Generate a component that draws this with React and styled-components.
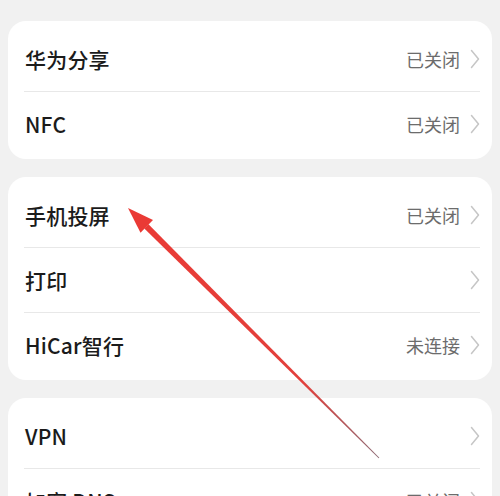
import React from "react";
import styled, { createGlobalStyle } from "styled-components";

const Global = createGlobalStyle`
  html, body { margin: 0; padding: 0; background: #f1f1f1; }
  body { font-family: "Noto Sans CJK SC", "Noto Sans", sans-serif; }
`;

const Page = styled.div`
  position: relative;
  width: 500px;
  height: 496px;
  overflow: hidden;
  background: #f1f1f1;
  box-sizing: border-box;
  padding: 21px 8px 0;
  display: flex;
  flex-direction: column;
  gap: 18px;
`;

const Card = styled.div`
  background: #ffffff;
  border-radius: 18px;
  padding: 6px 0 3px;
  display: flex;
  flex-direction: column;
  flex-shrink: 0;
`;

const Row = styled.div`
  height: 64px;
  display: flex;
  align-items: center;
  padding: 0 11px 0 17px;
`;

const Label = styled.div`
  flex: 1;
  font-size: 21px;
  font-weight: 500;
  color: #1b1b1b;
  letter-spacing: 0.2px;
`;

const Value = styled.div`
  font-size: 18px;
  color: #6c6c6c;
  margin-right: 9px;
`;

const Divider = styled.div`
  height: 1px;
  background: #e8e8e8;
  margin: 0 12px 0 16px;
`;

const Overlay = styled.svg`
  position: absolute;
  left: 0;
  top: 0;
  pointer-events: none;
`;

const Chevron = () => (
  <svg width="12" height="22" viewBox="0 0 12 22">
    <path d="M2.5 2.5 L9.5 11 L2.5 19.5" fill="none" stroke="#c6c6c6" strokeWidth="1.5" strokeLinecap="round" strokeLinejoin="round" />
  </svg>
);

const Item = ({ label, value }) => (
  <Row>
    <Label>{label}</Label>
    {value && <Value>{value}</Value>}
    <Chevron />
  </Row>
);

const Group = ({ items }) => (
  <Card>
    {items.map((it, i) => (
      <React.Fragment key={it.label}>
        {i > 0 && <Divider />}
        <Item {...it} />
      </React.Fragment>
    ))}
  </Card>
);

export default function App() {
  return (
    <>
      <Global />
      <Page>
        <Group items={[{ label: "华为分享", value: "已关闭" }, { label: "NFC", value: "已关闭" }]} />
        <Group
          items={[
            { label: "手机投屏", value: "已关闭" },
            { label: "打印" },
            { label: "HiCar智行", value: "未连接" },
          ]}
        />
        <Group items={[{ label: "VPN" }, { label: "加密 DNS", value: "已关闭" }]} />
        <Overlay width="500" height="496" viewBox="0 0 500 496">
          <defs>
            <linearGradient id="ag" x1="128" y1="208" x2="379" y2="458" gradientUnits="userSpaceOnUse">
              <stop offset="0" stopColor="#ea3a35" />
              <stop offset="0.7" stopColor="#e2403c" />
              <stop offset="1" stopColor="#8c6a74" />
            </linearGradient>
          </defs>
          <polygon
            points="148.5,224.2 379.35,457.65 378.65,458.35 144.3,228.4"
            fill="url(#ag)"
          />
          <polygon points="128,208 153,220 140.5,232.8" fill="#ea3a35" />
        </Overlay>
      </Page>
    </>
  );
}
